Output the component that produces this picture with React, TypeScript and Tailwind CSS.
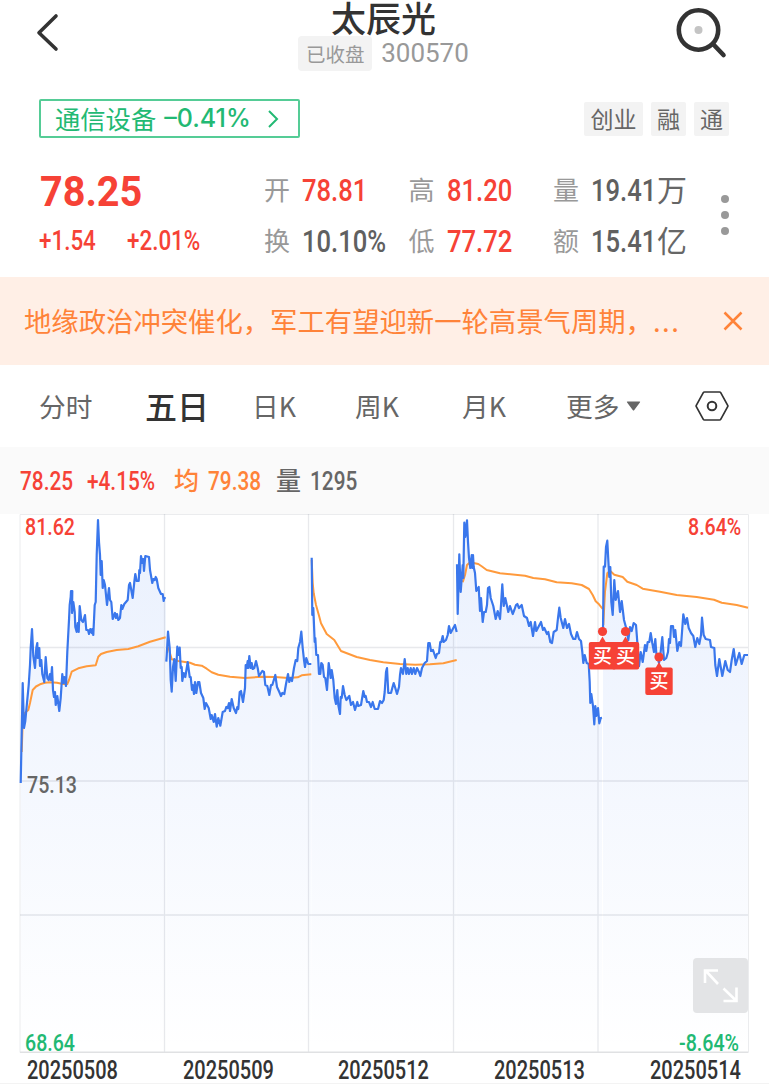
import React from "react";
import clsx from "clsx";

const days = [
  {
    date: "20250508",
    price:
      "20.7,783 22.7,683 24,728 25.3,721 26.7,706 28.7,685 30,665 30.7,648 32,629 33.3,656 35,668 36.3,648 37.3,643 37.7,658 39.3,648 40,666 41.3,660 42.3,674 44.3,682 45.7,657 47.3,678 48.7,680 50,674 51,680 52,667 53,690 54,697 55,692 55.7,705 57.3,696 59.3,711 60.7,698 62.3,674 63.3,683 64.3,677 66,686 67.3,652 69,620 69.7,605 70.7,597 71,591 72.3,591 72,613 73.3,602 74.7,612 75.3,627 76.7,632 77.7,623 78.7,632 79.7,606 81.3,620 83,622 85,615 86.3,630 88,630 89,634 90.3,629 91.7,633 92.3,629 93.3,635 94.7,605 95.7,602 96.7,555 98,520 99,542 100,555 100.7,575 101.7,561 102.7,588 103.7,580 105,585 106,595 107,605 109,588 110,600 111.3,602 112.7,619 115,613 116,618 117,614 118.3,620 120,618 121.3,605 122.3,609 124.3,604 127.7,600 129,585 130,583 132.7,598 134.3,582 135.3,574 136.7,581 138.7,581 139.3,570 140,573 141,556 142.3,563 143.3,559 144,571 145.3,556 149,557 150,570 152.3,583 153.3,579 154.7,580 155.7,577 156.7,579 158.3,588 161,594 162.7,594 163.7,601 164.3,598 165.7,598",
    average:
      "21.7,752 22.7,722 24.7,713 28.3,710 30,703 32.7,690 36,686.5 40,684.3 45,682.8 50,682.3 57,682.8 62.7,684 67.3,684 69,680 71.7,671.7 78.3,668.3 86.7,666.3 95.7,665.3 98.3,656.7 101,654 106.7,652 116.7,650 128.3,649 138.3,646.3 150,641.7 165.7,637.3",
  },
  {
    date: "20250509",
    price:
      "166.3,661.7 166.7,656 168,631.7 169.7,648 170.7,680 171.7,691.7 173,667 174.3,659 175.7,681 177.3,646.7 178.3,655 179.7,647.7 180.7,668 181.7,667 182.3,681 183.7,673 185.3,677 187.7,662 189.7,677 190.7,677 192,690 192.7,685 194,694 195,682 196.3,693 198,682 199.3,682 201,693 203.3,698 204.7,709 206,703 208.7,708 210.7,719 211.7,715 213.7,722 215,714 216.7,726.7 218.3,718 220.3,725.7 222.7,712 225,711 226.3,707 227.7,708 229,703 230,711 231.7,699 233.7,708 236,713 237.3,707 238.3,709 239.7,692 241,691 243,702 245,688 245.7,665 246.7,668 247.7,661 248.3,668 249.3,656 250.7,668 251.7,663 252.7,669 254.3,668 256,661 257.7,668 259,676 261,673 262.3,671 264,672 265.3,685 267.3,686 269.3,695 271,685 272.3,685 275.3,675 277,687 279.3,692 281,696 282.3,693 284.3,694 286,684 288,674 289.3,682 290.7,678 292,681 294,668 295.7,660 297.3,661 298.3,648 300,642 301.3,631.7 302.7,648 304,660 305,667 306.3,658 308.3,664 311.3,664",
    average:
      "168.3,646.7 170,653.3 171.7,659.3 178.3,661 190,662.7 195,664.7 201.7,665.7 206.7,668.7 211.7,672.3 218.3,674.7 230,676.7 245,678 261.7,676.7 275,677 288.3,678 297.7,677.3 301.7,675.3 311.3,674.3",
  },
  {
    date: "20250512",
    price:
      "311.7,557.7 312.3,615 313.3,608 314.7,642 315.3,638 316.3,655 318,655 319,674 320.3,674 321.3,663 322.7,665 324,677 325.3,678 327,690 328.7,663 330.7,678 331.7,670 333.3,680 334.7,698 336,704 337.3,690 338.3,705 340,714 340.7,697 341.7,698 343,686 344.7,695 346.3,700 349.3,696 351,705 353,702 355,710 357.3,702 358.3,706 361,705 363.3,691 364.7,697 365.7,696 367,702 369,702 371,707 372.7,702 374.7,709 378,709 380,701 382,703 383.7,700 384.7,692 386,672 387,668 388.3,693 391,693 392.3,688 393.7,683 395.3,688 397,694 399,687 400,675 401,668 403,674 404.7,659 406.3,674 407.7,668 409,674 410.7,668 412,674 413.7,668 415.3,674 417,668 419,672 420.3,676 422,668 424.7,663 427,661 428.3,643 429.7,643 431,651 433,650 435.7,658 437,654 439,653 440.3,642 441.3,642 442.7,636 443.7,642 446,640 447.7,635 449,626 450.7,633 453.3,628 455,625 456.7,632",
    average:
      "311.7,560 312.7,583 313.7,593.3 316,605 319.3,616.7 321,623.3 326.7,634 334.3,640 341,651 356.7,657 370,660 383.3,662.3 400,664 415,664.7 430,664.3 443.3,663.3 456.7,660",
  },
  {
    date: "20250513",
    price:
      "457,564.3 457.7,614 459.3,554.3 460.7,592 462.7,565 463.3,578 464.3,522.7 465.3,537 467,520.3 468,542 469,558 470.3,568 471.7,555 472.3,568 473,555 473.7,567 475,573 476.3,591 478.7,587 480,611 481,598 482.7,622 484,612 485.7,612 487,605 488,588 489.3,587 490.7,598 493.3,606 495.7,619 497.7,611 500,619 501,605 502.3,584.3 503.7,606 505.3,598 508.3,612 510,606 512.7,614 514.3,610 516,605 517.3,604 519,608 521.7,605 524,616 527,618 529,626 530.7,622 533,636 535,622 536.3,631 541,622 543,630 544.3,628 547,634 548.3,632 550.3,642 552,643 553.7,632 556.7,630 558,618 559.3,607.7 560.7,618 563.3,628 565,619 567,628 569,624 571,634 573.3,639 575.3,639 577,632 579,639 581,641 582.3,652 583.3,663 584.7,655 586.7,663 588.7,664 589.7,682 590.3,703 591.3,694 593,706 594.3,724.3 595.3,706 596.3,716 598,708 599.3,723.3 600.7,718 602,717.7",
    average:
      "462.7,582.3 465,575 467,565 470,562.3 478.3,564 482,566.5 486.7,570 500,573.3 525,575.7 533.3,578 545,579.3 556.7,582.3 571.7,583.3 581.7,585 589,589 592.7,595 595.7,601.3 599,604.3 602.7,609",
  },
  {
    date: "20250514",
    price:
      "603,630 603.7,566.7 605,566.7 606,547 607.3,540.7 608.3,560 609.3,577 610.3,567 611.3,602 612.7,615 614.3,580 615.7,600 618,591 620,612 621.7,601 624,620 626.7,630 628.3,640 630,627 631.7,631 633.7,623 636,625 637,638 639,666 640.7,652 642.7,662 645,645 646.3,651 647.7,642 649.3,642 650.7,633 652.3,643 654,652 655.3,639 656.3,653 659,663 660.3,655 662.3,637 664,660 666.3,658 668,652 669,639 670,643 671,626 673,626 674,637 675.3,630 677.3,651 679.3,642 681,646 683.3,614.3 685.3,624 687,618 688.7,628 691,633 693.3,636 695.3,647 697.3,638 699.3,644 701,635 702,617.7 703.7,635 705.7,639 710,640 711,647 714.3,648 715.3,665 717,676 719.3,659 722.3,676 725.3,661 727.7,670 730,672 731.7,660 733.7,649 735.7,665 739.3,653 741.7,664 744.3,655 748,655",
    average:
      "603.3,625 604.3,605 605,591.7 607.3,573.3 610,570.7 614.3,574.7 622.7,577 627.3,581.7 636.7,585 642.7,588.7 660,591.7 676.7,595 696.7,597 714,599.7 721.7,602.7 736.7,605 748,607.7",
  },
];

const buys = [
  { x: 602.5, y: 631.5 },
  { x: 625.5, y: 631.5 },
  { x: 659, y: 657 },
];

const quotes = [
  [
    { label: "开", value: "78.81", up: true },
    { label: "换", value: "10.10%" },
  ],
  [
    { label: "高", value: "81.20", up: true },
    { label: "低", value: "77.72", up: true },
  ],
  [
    { label: "量", value: "19.41", unit: "万" },
    { label: "额", value: "15.41", unit: "亿" },
  ],
];

// Narrow figures: the inner span is squeezed, the outer one keeps the box width
const Num = ({ children, className }: { children: string; className?: string }) => (
  <span className={clsx("inline-block shrink-0 whitespace-nowrap font-['Roboto'] font-medium", className)}>
    <span className="inline-block origin-left scale-x-[0.8]">{children}</span>
  </span>
);

const Header = () => (
  <header className="flex h-[85px] justify-between pl-[36px] pr-[41px]">
    <svg className="mt-[12px] h-[42px] w-[24px]" viewBox="0 0 24 42" fill="none" stroke="#333" strokeWidth="3.6" strokeLinecap="round" strokeLinejoin="round">
      <path d="M20 4 3 20.7 20 37" />
    </svg>
    <div className="flex flex-col items-center pl-[31px]">
      <h1 className="h-[35px] text-[35px] font-medium leading-[33px] text-[#333]">太辰光</h1>
      <div className="flex items-center gap-[9px]">
        <span className="h-[35px] w-[74px] rounded bg-[#f3f3f3] text-center text-[19.500px] leading-[35px] text-[#999]">
          已收盘
        </span>
        <span className="font-['Roboto'] text-[26px] leading-[36px] text-[#999]">300570</span>
      </div>
    </div>
    <svg className="mt-[6px] h-[54px] w-[52px]" viewBox="0 0 52 54" fill="none">
      <circle cx="22.5" cy="24" r="19.7" stroke="#333" strokeWidth="4.6" />
      <path d="m37 38 10.5 11" stroke="#333" strokeWidth="4.6" strokeLinecap="round" />
      <circle cx="22.5" cy="24" r="4" fill="#c4c4c4" />
    </svg>
  </header>
);

const Tags = () => (
  <div className="flex h-[67px] items-start justify-between pl-[39px] pr-[40px] pt-[14px]">
    <div className="flex h-[39px] w-[261px] items-center rounded-[2px] border-2 border-solid border-[#55cc96] pl-[14px] text-[#22b973]">
      <span className="text-[25.3px] leading-none">通信设备</span>
      <span className="ml-[8px] w-[92px] whitespace-nowrap font-['Inter'] text-[25px] font-medium leading-none">–0.41%</span>
      <svg className="ml-[12px] h-[18px] w-[11px]" viewBox="0 0 11 18" fill="none" stroke="currentColor" strokeWidth="2">
        <path d="m1 1 8 8-8 8" />
      </svg>
    </div>
    <div className="mt-[3px] flex gap-[8px] text-[23px] leading-[33px] text-[#666]">
      <span className="h-[34px] w-[59px] rounded-[2px] bg-[#f3f3f3] text-center">创业</span>
      <span className="h-[34px] w-[35px] rounded-[2px] bg-[#f3f3f3] text-center">融</span>
      <span className="h-[34px] w-[35px] rounded-[2px] bg-[#f3f3f3] text-center">通</span>
    </div>
  </div>
);

const Quote = () => (
  <section className="flex h-[125px] pl-[39px] pt-[12px]">
    <div className="w-[225px] text-[#f64236]">
      <div className="h-[52px] pl-px font-['Roboto'] text-[43px] font-bold leading-[54px]">
        <span className="inline-block origin-left scale-x-[0.92]">78.25</span>
      </div>
      <div className="flex text-[28px] leading-[50px]">
        <Num className="w-[88px]">+1.54</Num>
        <Num>+2.01%</Num>
      </div>
    </div>
    {quotes.map((column, i) => (
      <div key={i} className="w-[144.5px]">
        {column.map((q) => (
          <div key={q.label} className="flex h-[51px] items-center">
            <span className="w-[38px] pb-px text-[26px] leading-none text-[#999]">{q.label}</span>
            <Num className={clsx("w-[66px] text-[32px] leading-none", q.up ? "text-[#f64236]" : "text-[#606060]")}>
              {q.value}
            </Num>
            {q.unit && <span className="pb-[3px] text-[30px] leading-none text-[#666]">{q.unit}</span>}
          </div>
        ))}
      </div>
    ))}
    <div className="ml-[23px] mt-[31px] flex flex-col gap-[8px]">
      <i className="size-[8px] rounded-full bg-[#999]" />
      <i className="size-[8px] rounded-full bg-[#999]" />
      <i className="size-[8px] rounded-full bg-[#999]" />
    </div>
  </section>
);

const Notice = () => (
  <div className="flex h-[88px] items-center justify-between bg-[#ffefe6] pl-[24px] pr-[26px] text-[#ff8339]">
    <p className="whitespace-nowrap text-[27.35px] leading-none">
      地缘政治冲突催化，军工有望迎新一轮高景气周期，
      <span className="tracking-[1.6px]">...</span>
    </p>
    <svg className="h-[20px] w-[20px]" viewBox="0 0 20 20" stroke="currentColor" strokeWidth="2.5">
      <path d="m1.5 1.5 17 17m0-17-17 17" />
    </svg>
  </div>
);

const Tabs = () => (
  <nav className="flex h-[82px] items-center pl-[39px] text-[26.7px] leading-none text-[#666]">
    <span className="w-[106px]">分时</span>
    <span className="w-[107px] pb-[2px] text-[32px] font-medium text-[#333]">五日</span>
    <span className="w-[103px]">日K</span>
    <span className="w-[107px]">周K</span>
    <span className="w-[104px]">月K</span>
    <span className="w-[60px]">更多</span>
    <svg className="h-[10px] w-[15px]" viewBox="0 0 15 10" fill="#666">
      <path d="M1.5.5h12q1.2 0 .4 1L8.3 9q-.8 1-1.6 0L1.1 1.5q-.8-1 .4-1Z" />
    </svg>
    <svg className="ml-[54px] h-[32px] w-[34px]" viewBox="0 0 34 32" fill="none" stroke="#333">
      <path d="M9.5 2h15q.8 0 1.2.7l7 12.6q.4.7 0 1.4l-7 12.6q-.4.7-1.2.7h-15q-.8 0-1.2-.7l-7-12.6q-.4-.7 0-1.4l7-12.6Q8.7 2 9.500 2Z" strokeWidth="1.7" />
      <circle cx="17" cy="16" r="4.3" strokeWidth="2" />
    </svg>
  </nav>
);

const Summary = () => (
  <div className="flex h-[67px] items-center bg-[#fafafa] pl-[20px] text-[26px] leading-none text-[#666]">
    <Num className="w-[67px] text-[#f64236]">78.25</Num>
    <Num className="w-[87px] text-[#f64236]">+4.15%</Num>
    <span className="w-[34px] pb-[2px] text-[25px] font-medium text-[#ff8339]">均</span>
    <Num className="w-[68px] text-[#ff8339]">79.38</Num>
    <span className="w-[34px] pb-[2px] text-[25px] font-medium">量</span>
    <Num>1295</Num>
  </div>
);

const Chart = () => (
  <div className="relative ml-[19px] h-[539px] w-[730px]">
    <svg className="block h-[539px] w-[730px]" viewBox="19 514 730 539" fill="none">
      <defs>
        <linearGradient id="area" gradientUnits="userSpaceOnUse" x1="0" y1="514" x2="0" y2="1052">
          <stop offset="0" stopColor="#3a77f0" stopOpacity="0.11" />
          <stop offset="1" stopColor="#3a77f0" stopOpacity="0" />
        </linearGradient>
      </defs>
      <path d="M20 514.5H748.5V1052.5H20Z" stroke="#ebecee" />
      {days.map((d) => {
        const points = d.price.split(" ");
        const first = points[0].split(",")[0];
        const last = points[points.length - 1].split(",")[0];
        return <polygon key={d.date} points={`${first},1052 ${d.price} ${last},1052`} fill="url(#area)" />;
      })}
      <path
        d="M164.5 514v538M308.5 514v538M453.5 514v538M598 514v538M20 647.5H748M20 781H748M20 915H748"
        stroke="#5a6478"
        strokeOpacity="0.14"
        strokeWidth="1.3"
      />
      <path d="M20 1052.3H748" stroke="#e0e1e3" strokeWidth="1.4" />
      {days.map((d) => (
        <polyline key={d.date} points={d.average} stroke="#ff9a3c" strokeWidth="2" strokeLinejoin="round" />
      ))}
      {days.map((d) => (
        <polyline key={d.date} points={d.price} stroke="#3a77ec" strokeWidth="2.2" strokeLinejoin="round" />
      ))}
      {buys.map((b) => (
        <g key={b.x} fill="#f64236">
          <circle cx={b.x} cy={b.y} r="4.6" />
          <path d={`M${b.x - 3.5} ${b.y + 11}l3.5-6 3.5 6Z`} />
          <rect x={b.x - 13.7} y={b.y + 10.5} width="27.4" height="27.5" rx="2" />
          <text x={b.x} y={b.y + 31} textAnchor="middle" fontSize="19" fontWeight="500" fill="#fff">
            买
          </text>
        </g>
      ))}
    </svg>
    <div className="absolute left-[6px] top-[-1px] text-[24.5px] leading-[24px] text-[#f64236]">
      <Num>81.62</Num>
    </div>
    <div className="absolute left-[8px] top-[257px] text-[24.5px] leading-[24px] text-[#666]">
      <Num>75.13</Num>
    </div>
    <div className="absolute left-[6px] top-[515px] text-[24.5px] leading-[24px] text-[#22b973]">
      <Num>68.64</Num>
    </div>
    <div className="absolute left-[669px] top-[-1px] text-[24.5px] leading-[24px] text-[#f64236]">
      <Num>8.64%</Num>
    </div>
    <div className="absolute left-[660px] top-[515px] text-[24.5px] leading-[24px] text-[#22b973]">
      <Num>-8.64%</Num>
    </div>
    <button className="absolute right-[1px] top-[444px] size-[55px] rounded bg-[#e3e4e6]">
      <svg className="size-[55px]" viewBox="0 0 55 55" fill="none" stroke="#fff" strokeWidth="2.6">
        <path d="M12 25V12.5h13M12.5 12.5 25 26M30.5 30.5 43 42.5M43.5 29.5v13.5h-13" />
      </svg>
    </button>
  </div>
);

const Dates = () => (
  <div className="flex h-[31px] gap-[65.7px] border-b border-[#f3f3f3] pl-[27px] text-[25px] leading-[36px] text-[#333]">
    {days.map((d) => (
      <Num key={d.date} className="w-[90px]">
        {d.date}
      </Num>
    ))}
  </div>
);

const App = () => {
  return (
    <main className="h-[1088px] w-[769px] overflow-hidden bg-white font-['Noto_Sans_CJK_SC',sans-serif]">
      <Header />
      <Tags />
      <Quote />
      <Notice />
      <Tabs />
      <Summary />
      <Chart />
      <Dates />
    </main>
  );
};

export default App;
